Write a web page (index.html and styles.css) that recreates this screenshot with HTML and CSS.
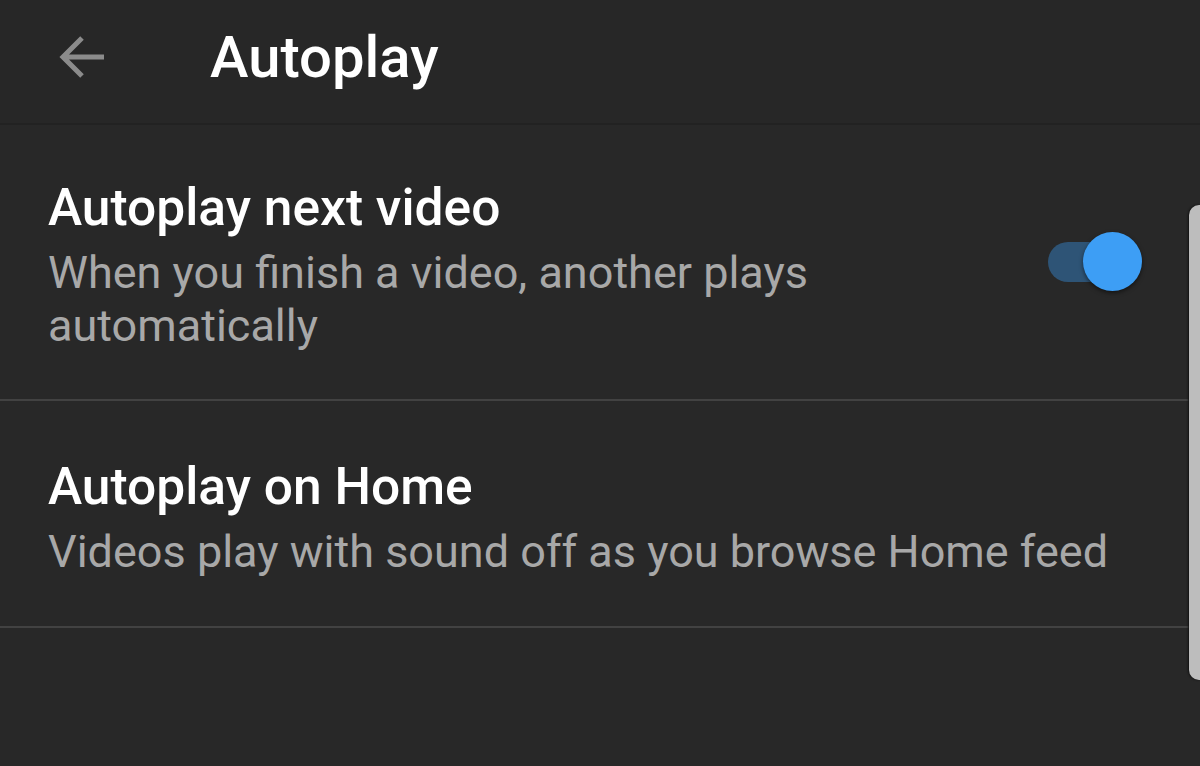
FILE: index.html
```html
<!DOCTYPE html>
<html lang="en">
<head>
  <meta charset="UTF-8" />
  <title>Autoplay</title>
  <link rel="stylesheet" href="styles.css">
</head>
<body>
  <div class="toolbar">
    <button class="back" aria-label="Back">
      <svg width="48" height="48" viewBox="0 0 48 48"><path d="M46 24H5M24 5L5 24l19 19" fill="none" stroke="#8b8b8b" stroke-width="5"/></svg>
    </button>
    <h1>Autoplay</h1>
  </div>

  <div class="settings">
    <div class="row first">
      <div class="text">
        <div class="title">Autoplay next video</div>
        <div class="sub">When you finish a video, another plays<br>automatically</div>
      </div>
      <div class="switch on"><span class="track"></span><span class="knob"></span></div>
    </div>
    <div class="row">
      <div class="text">
        <div class="title">Autoplay on Home</div>
        <div class="sub">Videos play with sound off as you browse Home feed</div>
      </div>
    </div>
  </div>

  <div class="scrollbar"></div>
</body>
</html>
```

FILE: styles.css
```css
body { margin: 0; background: #282828; font-family: Roboto, "Noto Sans", sans-serif; color: #fff; height: 766px; overflow: hidden; position: relative; }
.toolbar { height: 123px; display: flex; align-items: center; background: #272727; border-bottom: 2px solid #222; }
.back { background: none; border: none; padding: 0; margin-left: 58px; width: 48px; height: 48px; margin-top: -10px; }
.back svg { display: block; }
h1 { margin: -10px 0 0 104px; font-size: 58px; font-weight: 500; }
.row { display: flex; align-items: flex-start; padding: 56px 58px 48px 48px; border-bottom: 2px solid #424242; }
.row.first { padding-top: 53px; padding-bottom: 47px; }
.text { flex: 1; }
.title { font-size: 51.5px; font-weight: 500; line-height: 60px; }
.sub { font-size: 45px; color: #a8a8a8; line-height: 53px; margin-top: 8px; }
.switch { position: relative; width: 94px; height: 59px; margin-top: 54px; }
.track { position: absolute; left: 0; top: 10px; width: 76px; height: 40px; border-radius: 20px; background: #2e5476; }
.knob { position: absolute; right: 0; top: 0; width: 59px; height: 59px; border-radius: 50%; background: #3d9ef5; box-shadow: 0 2px 4px rgba(0,0,0,.5); }
.scrollbar { position: absolute; right: 0; top: 205px; width: 11px; height: 475px; background: #bdbdbd; border-radius: 10px 0 0 10px; box-shadow: -1px 0 2px #111; }
```
